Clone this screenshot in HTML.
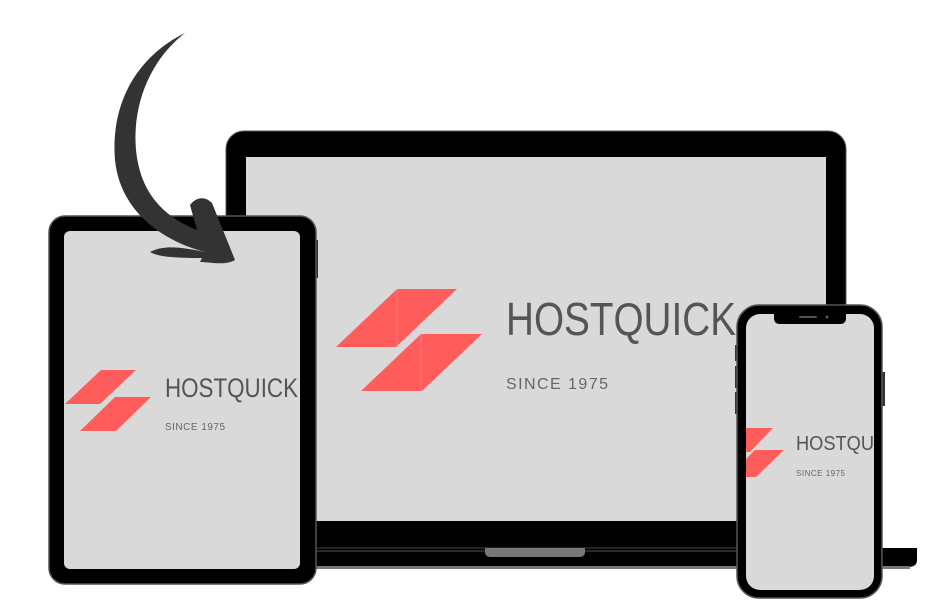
<!DOCTYPE html>
<html><head><style>body{margin:0;background:#fff}svg{display:block}</style></head>
<body>
<svg width="948" height="615" viewBox="0 0 948 615" xmlns="http://www.w3.org/2000/svg" font-family="Liberation Sans, sans-serif">
<!-- laptop base -->
<path d="M240 548 H917 V560 Q917 567 908 567 H240 Z" fill="#000"/>
<rect x="240" y="566" width="670" height="3" fill="#777"/>
<!-- laptop lid -->
<rect x="226" y="131" width="620" height="420" rx="18" fill="#000" stroke="#555" stroke-width="1"/>
<rect x="246" y="157" width="580" height="364" fill="#d9d9d9"/>
<line x1="246" y1="548" x2="826" y2="548" stroke="#444" stroke-width="1"/>
<path d="M485 548 H585 V552 Q585 557 579 557 H491 Q485 557 485 552 Z" fill="#777"/>
<!-- laptop logo -->
<polygon points="336,347 397,289 457,289 396,347" fill="#ff5c5c"/>
<polygon points="361,391 421,334 482,334 422,391" fill="#ff5c5c"/>
<line x1="397" y1="289" x2="397" y2="347" stroke="#ff8080" stroke-width="0.8"/>
<line x1="421" y1="334" x2="421" y2="391" stroke="#ff8080" stroke-width="0.8"/>
<text x="506" y="335" font-size="46" fill="#555" textLength="230" lengthAdjust="spacingAndGlyphs">HOSTQUICK</text>
<text x="506" y="389" font-size="16" fill="#666" textLength="102" lengthAdjust="spacing">SINCE 1975</text>
<!-- tablet -->
<rect x="314" y="240" width="4" height="38" fill="#333"/>
<rect x="49" y="216" width="267" height="368" rx="16" fill="#000" stroke="#555" stroke-width="1.5"/>
<rect x="64" y="231" width="236" height="338" rx="6" fill="#d9d9d9"/>
<polygon points="65,404 101,370 136,370 100,404" fill="#ff5c5c"/>
<polygon points="80,431 115,397 151,397 116,431" fill="#ff5c5c"/>
<text x="165" y="397" font-size="27" fill="#555" textLength="133" lengthAdjust="spacingAndGlyphs">HOSTQUICK</text>
<text x="165" y="430" font-size="10" fill="#666" textLength="60" lengthAdjust="spacing">SINCE 1975</text>
<!-- arrow -->
<path d="M185 33 C140 55 110 100 115 160 C120 210 160 240 205 252 L200 262 C210 262 225 266 235 260 L212 203 C204 195 195 198 190 205 L197 230 C160 215 140 190 136 150 C132 105 150 60 185 33 Z" fill="#333"/>
<path d="M205 252 C185 248 165 244 150 252 C160 258 185 258 205 258 Z" fill="#333"/>
<!-- phone -->
<rect x="735" y="345" width="3" height="16" fill="#333"/>
<rect x="735" y="366" width="3" height="22" fill="#333"/>
<rect x="735" y="392" width="3" height="22" fill="#333"/>
<rect x="882" y="372" width="3" height="34" fill="#333"/>
<rect x="737" y="305" width="145" height="293" rx="22" fill="#000" stroke="#555" stroke-width="1.5"/>
<rect x="746" y="314" width="128" height="276" rx="14" fill="#d9d9d9"/>
<path d="M774 314 H846 V318 Q846 324 840 324 H780 Q774 324 774 318 Z" fill="#000"/>
<rect x="799" y="316" width="18" height="2" rx="1" fill="#555"/>
<circle cx="827" cy="317" r="1.5" fill="#555"/>
<polygon points="746,428 773,428 750,452 746,452" fill="#ff5c5c"/>
<polygon points="746,477 756,477 784,450 755,450 746,459" fill="#ff5c5c"/>
<text x="796" y="450" font-size="20" fill="#555" textLength="78" lengthAdjust="spacingAndGlyphs">HOSTQU</text>
<text x="796" y="476" font-size="8" fill="#666" textLength="49" lengthAdjust="spacing">SINCE 1975</text>
</svg>
</body></html>
